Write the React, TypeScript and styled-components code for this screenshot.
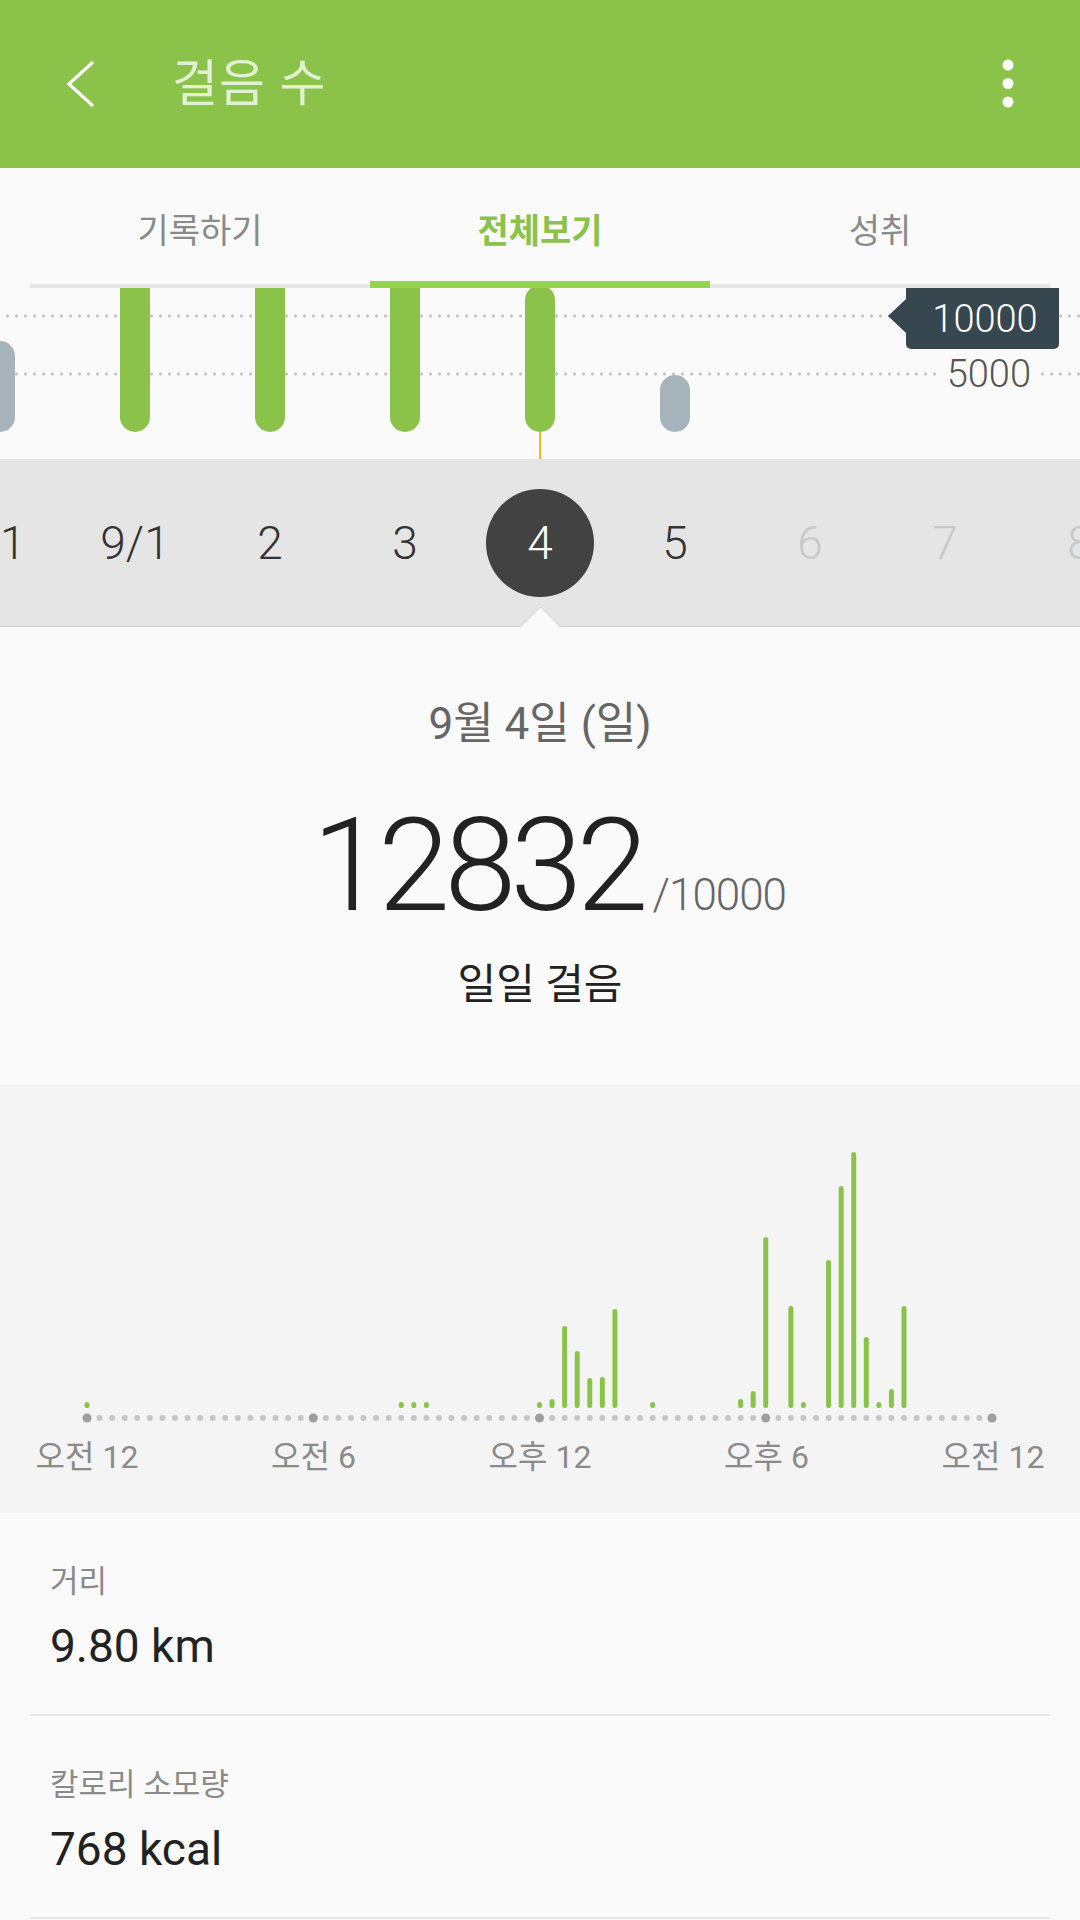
import React from 'react';
import styled, { createGlobalStyle } from 'styled-components';

const GlobalStyle = createGlobalStyle`
  html, body {
    margin: 0;
    padding: 0;
    background: #fafafa;
  }
  body {
    font-family: Roboto, "Noto Sans CJK KR", sans-serif;
    -webkit-font-smoothing: antialiased;
  }
  * {
    box-sizing: border-box;
  }
`;

const Screen = styled.div`
  width: 1080px;
  height: 1920px;
  overflow: hidden;
  background: #fafafa;
  display: flex;
  flex-direction: column;
`;

const Header = styled.header`
  height: 168px;
  flex-shrink: 0;
  background: #8bc34a;
  display: flex;
  align-items: center;
  padding: 0 62px;
`;

const BackIcon = styled.svg`
  width: 36px;
  height: 50px;
  flex-shrink: 0;
`;

const Title = styled.h1`
  flex: 1;
  margin: 0 0 0 74px;
  font-size: 50px;
  font-weight: 400;
  line-height: 60px;
  letter-spacing: 1px;
  color: rgba(255, 255, 255, 0.76);
`;

const MoreIcon = styled.svg`
  width: 20px;
  height: 50px;
  flex-shrink: 0;
`;

const TabBar = styled.nav`
  display: flex;
  height: 113px;
  padding: 8px 30px 0;
  flex-shrink: 0;
`;

const Tab = styled.div<{ $active?: boolean }>`
  flex: 1;
  display: flex;
  align-items: center;
  justify-content: center;
  font-size: 34px;
  font-weight: ${p => (p.$active ? 700 : 400)};
  color: ${p => (p.$active ? '#8bc34a' : '#8a8a8a')};
`;

const TabTrack = styled.div`
  display: flex;
  align-items: flex-end;
  height: 7px;
  margin: 0 30px;
  flex-shrink: 0;
`;

const TabLine = styled.div<{ $active?: boolean }>`
  flex: 1;
  height: ${p => (p.$active ? '7px' : '4px')};
  background: ${p => (p.$active ? '#97d352' : '#e6e6e6')};
`;

const WeekChart = styled.div`
  position: relative;
  height: 171px;
  flex-shrink: 0;
  overflow: hidden;
  background-image:
    radial-gradient(circle at center, #c6c6c6 1.3px, transparent 1.9px),
    radial-gradient(circle at center, #c6c6c6 1.3px, transparent 1.9px);
  background-size: 9px 4px;
  background-repeat: repeat-x;
  background-position: 3px 26px, 3px 84px;
`;

const WeekRow = styled.div`
  display: flex;
  height: 100%;
  margin-left: -67.5px;
`;

const WeekColumn = styled.div`
  width: 135px;
  height: 100%;
  flex-shrink: 0;
  display: flex;
  flex-direction: column;
  align-items: center;
  justify-content: flex-end;
`;

const DayBar = styled.div<{ $tone: Tone }>`
  width: 30px;
  flex-shrink: 0;
  border-radius: 15px;
  background: ${p => (p.$tone === 'goal' ? '#8bc34a' : '#a6b3ba')};
`;

const Stem = styled.div<{ $show: boolean }>`
  width: 2px;
  height: 27px;
  flex-shrink: 0;
  background: ${p => (p.$show ? '#f5b722' : 'transparent')};
`;

const GoalTag = styled.div`
  position: absolute;
  top: 0;
  right: 21px;
  width: 153px;
  height: 61px;
  padding-left: 5px;
  border-radius: 0 0 5px 5px;
  background: #37474f;
  color: #fff;
  font-size: 38px;
  font-weight: 300;
  display: flex;
  align-items: center;
  justify-content: center;

  &::before {
    content: '';
    position: absolute;
    left: -18px;
    top: 11px;
    border-style: solid;
    border-width: 17px 18px 17px 0;
    border-color: transparent #37474f transparent transparent;
  }
`;

const GridLabel = styled.span`
  position: absolute;
  right: 40px;
  top: 64px;
  padding: 0 9px;
  background: #fafafa;
  font-size: 38px;
  font-weight: 300;
  line-height: 44px;
  color: #555;
`;

const DateStrip = styled.div`
  position: relative;
  height: 168px;
  flex-shrink: 0;
  background: #e5e5e5;
  border-bottom: 1px solid #cfcfcf;

  &::after {
    content: '';
    position: absolute;
    left: 50%;
    bottom: -15px;
    width: 28px;
    height: 28px;
    margin-left: -14px;
    background: #fafafa;
    border-top: 1px solid #cfcfcf;
    border-left: 1px solid #cfcfcf;
    border-top-left-radius: 3px;
    transform: rotate(45deg);
    z-index: 1;
  }
`;

const DateRow = styled.div`
  display: flex;
  height: 100%;
  margin-left: -67.5px;
`;

const DateCell = styled.div`
  width: 135px;
  flex-shrink: 0;
  display: flex;
  align-items: center;
  justify-content: center;
`;

const DateChip = styled.span<{ $state: DayState }>`
  width: 108px;
  height: 108px;
  border-radius: 50%;
  display: flex;
  align-items: center;
  justify-content: center;
  font-size: 46px;
  font-weight: 300;
  background: ${p => (p.$state === 'selected' ? '#424242' : 'transparent')};
  color: ${p =>
    p.$state === 'selected' ? '#fff' : p.$state === 'future' ? '#c8c8c8' : '#333'};
`;

const Summary = styled.section`
  display: flex;
  flex-direction: column;
  align-items: center;
  padding: 72px 0 75px;
  flex-shrink: 0;
`;

const DateLabel = styled.div`
  font-size: 44px;
  line-height: 50px;
  color: #666;
`;

const CountRow = styled.div`
  display: flex;
  align-items: baseline;
  margin-top: 52px;
  padding-left: 18px;
`;

const Count = styled.span`
  font-size: 130px;
  line-height: 130px;
  font-weight: 300;
  letter-spacing: -6px;
  color: #222;
`;

const Goal = styled.span`
  margin-left: 10px;
  font-size: 44px;
  font-weight: 300;
  letter-spacing: -1px;
  color: #666;
`;

const CountCaption = styled.div`
  margin-top: 29px;
  font-size: 42px;
  line-height: 50px;
  color: #222;
`;

const HourPanel = styled.section`
  height: 428px;
  flex-shrink: 0;
  background: #f4f4f4;
  display: flex;
  flex-direction: column;
`;

const HourPlot = styled.svg`
  display: block;
  width: 1080px;
  height: 340px;
`;

const AxisRow = styled.div`
  display: flex;
  justify-content: space-between;
  padding: 0 17px;
  margin-top: 12px;
`;

const AxisLabel = styled.span`
  width: 140px;
  text-align: center;
  font-size: 32px;
  line-height: 40px;
  color: #8a8a8a;
`;

const StatList = styled.section`
  flex: 1;
  background: #fafafa;
`;

const StatItem = styled.div`
  height: 203px;
  margin: 0 30px;
  padding: 50px 20px 0;
  border-bottom: 2px solid #e6e6e6;
`;

const StatLabel = styled.div`
  font-size: 31px;
  line-height: 38px;
  color: #8a8a8a;
`;

const StatValue = styled.div`
  margin-top: 19px;
  font-size: 46px;
  line-height: 52px;
  color: #222;
`;

type Tone = 'goal' | 'under';
type DayState = 'past' | 'selected' | 'future';

interface WeekDay {
  label: string;
  bar?: number;
  tone?: Tone;
  state: DayState;
}

const week: WeekDay[] = [
  { label: '31', bar: 91, tone: 'under', state: 'past' },
  { label: '9/1', bar: 220, tone: 'goal', state: 'past' },
  { label: '2', bar: 220, tone: 'goal', state: 'past' },
  { label: '3', bar: 220, tone: 'goal', state: 'past' },
  { label: '4', bar: 147, tone: 'goal', state: 'selected' },
  { label: '5', bar: 57, tone: 'under', state: 'past' },
  { label: '6', state: 'future' },
  { label: '7', state: 'future' },
  { label: '8', state: 'future' },
];

// 20-minute slots, height of bar in px (0 means a dot)
const hourly: [number, number][] = [
  [0, 0], [25, 0], [26, 0], [27, 0], [36, 0], [37, 9], [38, 82], [39, 57],
  [40, 30], [41, 31], [42, 99], [45, 0], [52, 9], [53, 17], [54, 171],
  [56, 102], [57, 0], [59, 148], [60, 222], [61, 256], [62, 71], [63, 0],
  [64, 19], [65, 102],
];

const PLOT_LEFT = 87;
const SLOT = 905 / 72;
const BAR_BOTTOM = 323;
const AXIS_Y = 333;

const axisLabels = ['오전 12', '오전 6', '오후 12', '오후 6', '오전 12'];

export default function App() {
  return (
    <Screen>
      <GlobalStyle />
      <Header>
        <BackIcon viewBox="0 0 36 50">
          <path d="M31 3 L7 25 L31 47" fill="none" stroke="#fff" strokeWidth="3.2" />
        </BackIcon>
        <Title>걸음 수</Title>
        <MoreIcon viewBox="0 0 20 50">
          <circle cx="10" cy="6" r="5.5" fill="#fff" />
          <circle cx="10" cy="24.5" r="5.5" fill="#fff" />
          <circle cx="10" cy="43" r="5.5" fill="#fff" />
        </MoreIcon>
      </Header>

      <TabBar>
        <Tab>기록하기</Tab>
        <Tab $active>전체보기</Tab>
        <Tab>성취</Tab>
      </TabBar>
      <TabTrack>
        <TabLine />
        <TabLine $active />
        <TabLine />
      </TabTrack>

      <WeekChart>
        <WeekRow>
          {week.map((d, i) => (
            <WeekColumn key={i}>
              {d.bar && d.tone && <DayBar $tone={d.tone} style={{ height: d.bar }} />}
              <Stem $show={d.state === 'selected'} />
            </WeekColumn>
          ))}
        </WeekRow>
        <GoalTag>10000</GoalTag>
        <GridLabel>5000</GridLabel>
      </WeekChart>

      <DateStrip>
        <DateRow>
          {week.map((d, i) => (
            <DateCell key={i}>
              <DateChip $state={d.state}>{d.label}</DateChip>
            </DateCell>
          ))}
        </DateRow>
      </DateStrip>

      <Summary>
        <DateLabel>9월 4일 (일)</DateLabel>
        <CountRow>
          <Count>12832</Count>
          <Goal>/10000</Goal>
        </CountRow>
        <CountCaption>일일 걸음</CountCaption>
      </Summary>

      <HourPanel>
        <HourPlot viewBox="0 0 1080 340">
          {Array.from({ length: 73 }, (_, i) => {
            const major = i % 18 === 0;
            return (
              <circle
                key={i}
                cx={PLOT_LEFT + i * SLOT}
                cy={AXIS_Y}
                r={major ? 4.5 : 3}
                fill={major ? '#9e9e9e' : '#c6c6c6'}
              />
            );
          })}
          {hourly.map(([slot, h]) => {
            const height = Math.max(h, 6);
            return (
              <rect
                key={slot}
                x={PLOT_LEFT + slot * SLOT - 2.5}
                y={BAR_BOTTOM - height}
                width={5}
                height={height}
                rx={2.5}
                fill="#8bc34a"
              />
            );
          })}
        </HourPlot>
        <AxisRow>
          {axisLabels.map((l, i) => (
            <AxisLabel key={i}>{l}</AxisLabel>
          ))}
        </AxisRow>
      </HourPanel>

      <StatList>
        <StatItem>
          <StatLabel>거리</StatLabel>
          <StatValue>9.80 km</StatValue>
        </StatItem>
        <StatItem>
          <StatLabel>칼로리 소모량</StatLabel>
          <StatValue>768 kcal</StatValue>
        </StatItem>
      </StatList>
    </Screen>
  );
}
